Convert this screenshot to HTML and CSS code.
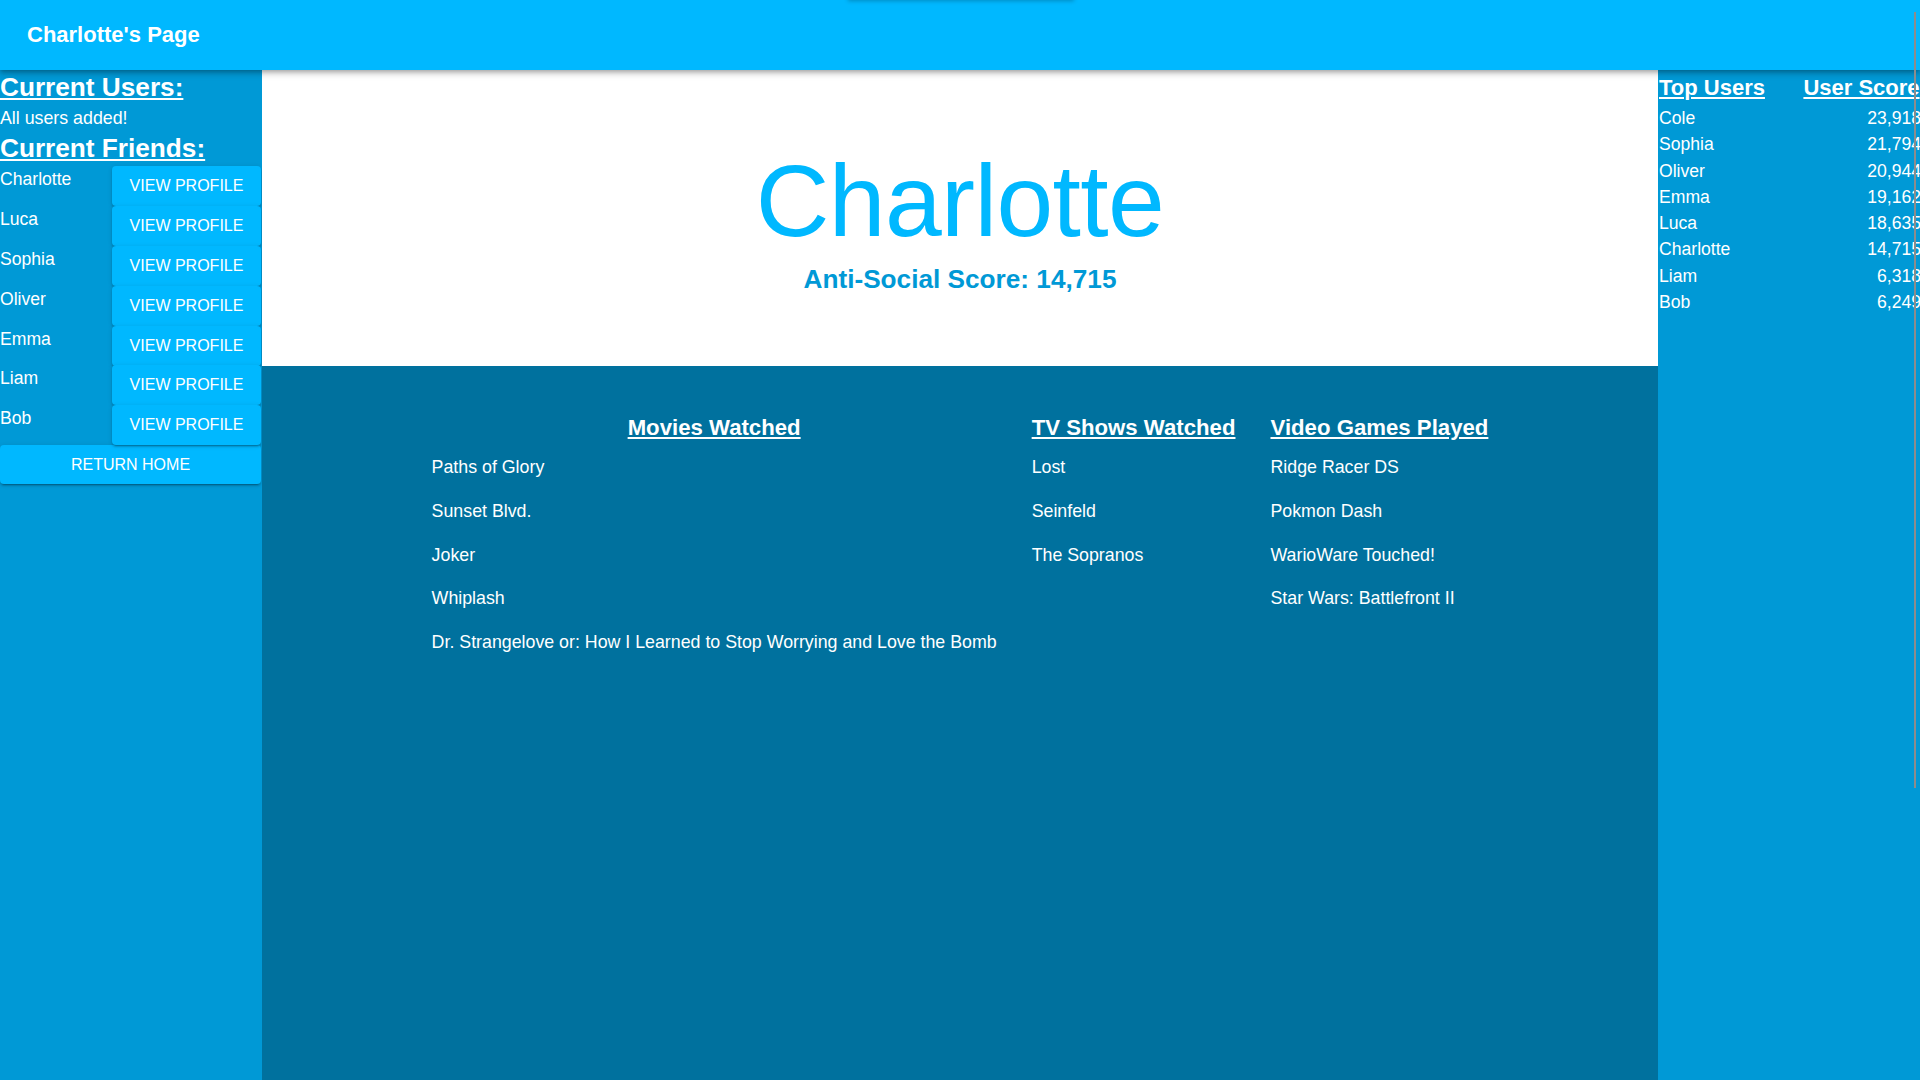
FILE: index.html
```html
<!DOCTYPE html>
<html lang="en">
<head>
<meta charset="utf-8">
<title>Charlotte's Page</title>
<link rel="stylesheet" href="styles.css">
</head>
<body>
<header class="appbar">
  <h1 class="appbar-title">Charlotte's Page</h1>
  <div class="appbar-notch"></div>
</header>
<div class="layout">
  <aside class="sidebar">
    <h2 class="side-heading">Current Users:</h2>
    <p class="side-note">All users added!</p>
    <h2 class="side-heading side-heading-friends">Current Friends:</h2>
    <ul class="friend-list">
      <li class="friend-row"><span class="friend-name">Charlotte</span><button class="btn btn-view">View Profile</button></li>
      <li class="friend-row"><span class="friend-name">Luca</span><button class="btn btn-view">View Profile</button></li>
      <li class="friend-row"><span class="friend-name">Sophia</span><button class="btn btn-view">View Profile</button></li>
      <li class="friend-row"><span class="friend-name">Oliver</span><button class="btn btn-view">View Profile</button></li>
      <li class="friend-row"><span class="friend-name">Emma</span><button class="btn btn-view">View Profile</button></li>
      <li class="friend-row"><span class="friend-name">Liam</span><button class="btn btn-view">View Profile</button></li>
      <li class="friend-row"><span class="friend-name">Bob</span><button class="btn btn-view">View Profile</button></li>
    </ul>
    <button class="btn btn-home">Return Home</button>
  </aside>
  <main class="content">
    <section class="hero">
      <h1 class="hero-name">Charlotte</h1>
      <p class="hero-score">Anti-Social Score: 14,715</p>
    </section>
    <section class="media">
      <div class="media-col">
        <h3 class="media-heading">Movies Watched</h3>
        <ul class="media-list">
          <li>Paths of Glory</li>
          <li>Sunset Blvd.</li>
          <li>Joker</li>
          <li>Whiplash</li>
          <li>Dr. Strangelove or: How I Learned to Stop Worrying and Love the Bomb</li>
        </ul>
      </div>
      <div class="media-col">
        <h3 class="media-heading">TV Shows Watched</h3>
        <ul class="media-list">
          <li>Lost</li>
          <li>Seinfeld</li>
          <li>The Sopranos</li>
        </ul>
      </div>
      <div class="media-col">
        <h3 class="media-heading">Video Games Played</h3>
        <ul class="media-list">
          <li>Ridge Racer DS</li>
          <li>Pokmon Dash</li>
          <li>WarioWare Touched!</li>
          <li>Star Wars: Battlefront II</li>
        </ul>
      </div>
    </section>
  </main>
  <aside class="leaderboard">
    <div class="lb-grid">
      <div class="lb-head">Top Users</div><div class="lb-head lb-head-score">User Score</div>
      <div class="lb-name">Cole</div><div class="lb-score">23,918</div>
      <div class="lb-name">Sophia</div><div class="lb-score">21,794</div>
      <div class="lb-name">Oliver</div><div class="lb-score">20,944</div>
      <div class="lb-name">Emma</div><div class="lb-score">19,162</div>
      <div class="lb-name">Luca</div><div class="lb-score">18,635</div>
      <div class="lb-name">Charlotte</div><div class="lb-score">14,715</div>
      <div class="lb-name">Liam</div><div class="lb-score">6,318</div>
      <div class="lb-name">Bob</div><div class="lb-score">6,249</div>
    </div>
  </aside>
</div>
<div class="scroll-thumb"></div>
</body>
</html>
```
FILE: styles.css
```css
html, body {
  margin: 0;
  padding: 0;
  height: 100%;
}
body {
  font-family: "Liberation Sans", Arial, sans-serif;
  color: #ffffff;
  overflow: hidden;
  display: flex;
  flex-direction: column;
  position: relative;
}
.appbar {
  flex: 0 0 70px;
  height: 70px;
  background: #00b8ff;
  display: flex;
  align-items: center;
  padding: 0 0 2px 27px;
  box-sizing: border-box;
  position: relative;
  z-index: 2;
  box-shadow: 0 2px 4px -1px rgba(0,0,0,0.2), 0 4px 5px 0 rgba(0,0,0,0.14), 0 1px 10px 0 rgba(0,0,0,0.12);
}
.appbar-title {
  margin: 0;
  font-size: 22px;
  line-height: 25px;
  font-weight: 700;
}
.appbar-notch {
  position: absolute;
  top: -10px;
  left: 848px;
  width: 226px;
  height: 10px;
  box-shadow: 0 1px 4px rgba(0,0,0,0.25);
}
.layout {
  flex: 1;
  display: flex;
  min-height: 0;
}
.sidebar {
  flex: 0 0 262px;
  width: 262px;
  box-sizing: border-box;
  background: #0099d6;
  padding: 2px 1px 0 0;
}
.side-heading {
  margin: 0;
  font-size: 26.2px;
  line-height: 30px;
  font-weight: 700;
  text-decoration: underline;
}
.side-heading-friends {
  margin-top: -1px;
  margin-bottom: 3px;
}
.side-note {
  margin: 6px 0;
  font-size: 17.8px;
  line-height: 20px;
}
.friend-list {
  list-style: none;
  margin: 0;
  padding: 0;
}
.friend-row {
  display: grid;
  grid-template-columns: 112px 1fr;
  height: 39.9px;
  align-items: start;
}
.friend-name {
  font-size: 17.6px;
  line-height: 20px;
  padding-top: 3px;
}
.btn {
  font-family: "Liberation Sans", Arial, sans-serif;
  background: #00b8ff;
  color: #ffffff;
  border: 0;
  border-radius: 4px;
  font-size: 16px;
  line-height: 28px;
  padding: 6px 16px;
  text-transform: uppercase;
  box-shadow: 0 3px 1px -2px rgba(0,0,0,0.2), 0 2px 2px 0 rgba(0,0,0,0.14), 0 1px 5px 0 rgba(0,0,0,0.12);
  cursor: pointer;
}
.btn-view {
  height: 40px;
  width: 149px;
}
.btn-home {
  display: block;
  width: 261px;
  height: 39px;
  padding: 5px 16px;
}
.content {
  flex: 1;
  display: flex;
  flex-direction: column;
  min-width: 0;
}
.hero {
  background: #ffffff;
  height: 296px;
  box-sizing: border-box;
  padding-top: 71px;
  text-align: center;
}
.hero-name {
  margin: 0;
  font-size: 102px;
  line-height: 120px;
  font-weight: 400;
  letter-spacing: -0.6px;
  color: #00b8ff;
}
.hero-score {
  margin: 3px 0 0;
  font-size: 26.2px;
  line-height: 31px;
  font-weight: 700;
  color: #0099d6;
}
.media {
  flex: 1;
  background: #00719e;
  display: flex;
  justify-content: center;
  align-items: flex-start;
  gap: 35px;
  padding-top: 49px;
}
.media-col {
  display: flex;
  flex-direction: column;
}
.media-heading {
  margin: 0 0 6px;
  font-size: 22.2px;
  line-height: 25px;
  font-weight: 700;
  text-decoration: underline;
  text-align: center;
  white-space: nowrap;
}
.media-list {
  list-style: none;
  margin: 0;
  padding: 0;
}
.media-list li {
  font-size: 17.8px;
  line-height: 19.8px;
  padding: 12px 0;
  white-space: nowrap;
}
.leaderboard {
  flex: 0 0 262px;
  width: 262px;
  box-sizing: border-box;
  background: #0099d6;
  padding: 5px 0 0 1px;
  overflow: visible;
}
.lb-grid {
  display: grid;
  grid-template-columns: 143px 119px;
}
.lb-head {
  font-size: 22px;
  line-height: 25px;
  font-weight: 700;
  text-decoration: underline;
  padding-bottom: 5px;
  white-space: nowrap;
}
.lb-head-score {
  text-align: center;
}
.lb-name, .lb-score {
  font-size: 17.6px;
  line-height: 26.25px;
  white-space: nowrap;
}
.lb-score {
  text-align: right;
}
.scroll-thumb {
  position: absolute;
  left: 1914px;
  top: 12px;
  width: 2px;
  height: 776px;
  background: #8c8c8c;
  z-index: 3;
}
```
